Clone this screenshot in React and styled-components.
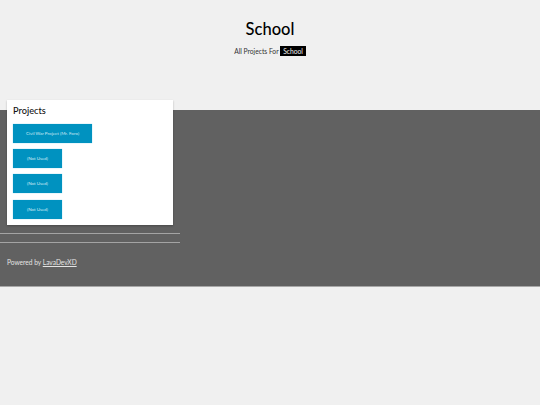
import React from "react";
import styled, { createGlobalStyle } from "styled-components";

const GlobalStyle = createGlobalStyle`
  html, body {
    margin: 0;
    padding: 0;
    background: #f0f0f0;
    font-family: "Lato", "Open Sans", sans-serif;
  }
`;

const Header = styled.header`
  height: 110px;
  padding-top: 20px;
  box-sizing: border-box;
  text-align: center;
`;

const Title = styled.h1`
  margin: 0;
  height: 19px;
  line-height: 19px;
  font-size: 16.5px;
  font-weight: 500;
  color: #000;
`;

const Subtitle = styled.p`
  margin: 7px 0 0;
  height: 11px;
  line-height: 11px;
  font-size: 6.7px;
  color: #333;
`;

const Tag = styled.span`
  display: inline-block;
  padding: 0 3px;
  background: #000;
  color: #f0f0f0;
  line-height: 10px;
`;

const Main = styled.main`
  display: flow-root;
  background: #616161;
  height: 177px;
  border-bottom: 1px solid #a8a8a8;
  box-sizing: border-box;
`;

const Card = styled.section`
  width: 166px;
  height: 125px;
  margin: -10px 0 0 7px;
  padding: 5px 6px 0;
  box-sizing: border-box;
  background: #fff;
  box-shadow: 0 1px 2px rgba(0, 0, 0, 0.25);
  position: relative;
`;

const CardTitle = styled.h2`
  margin: 0 0 6.5px;
  height: 12px;
  line-height: 12px;
  font-size: 9.2px;
  font-weight: 500;
  color: #111;
`;

const ProjectList = styled.div`
  display: flex;
  flex-direction: column;
  align-items: flex-start;
  gap: 6.4px;
`;

const ProjectButton = styled.button`
  width: ${({ $wide }) => ($wide ? "79px" : "49px")};
  height: 19px;
  padding: 0;
  border: none;
  background: #0092c0;
  box-shadow: 0 0 1px #7fd0ea;
  color: #cfeaf4;
  font-family: inherit;
  font-size: 4.5px;
`;

const Rule = styled.hr`
  width: 180px;
  height: 1px;
  margin: 8px 0 0;
  border: none;
  background: #a4a4a4;
`;

const Footer = styled.footer`
  margin-top: 15px;
  padding-left: 7px;
  font-size: 6.6px;
  line-height: 9px;
  color: #e4e4e4;
`;

const FooterLink = styled.a`
  color: #e4e4e4;
  text-decoration: underline;
`;

const projects = ["Civil War Project (Mr. Foro)", "(Not Used)", "(Not Used)", "(Not Used)"];

export default function App() {
  return (
    <>
      <GlobalStyle />
      <Header>
        <Title>School</Title>
        <Subtitle>
          All Projects For <Tag>School</Tag>
        </Subtitle>
      </Header>
      <Main>
        <Card>
          <CardTitle>Projects</CardTitle>
          <ProjectList>
            {projects.map((name, i) => (
              <ProjectButton key={i} $wide={i === 0}>
                {name}
              </ProjectButton>
            ))}
          </ProjectList>
        </Card>
        <Rule />
        <Rule />
        <Footer>
          Powered by <FooterLink href="#">LavaDevXD</FooterLink>
        </Footer>
      </Main>
    </>
  );
}
